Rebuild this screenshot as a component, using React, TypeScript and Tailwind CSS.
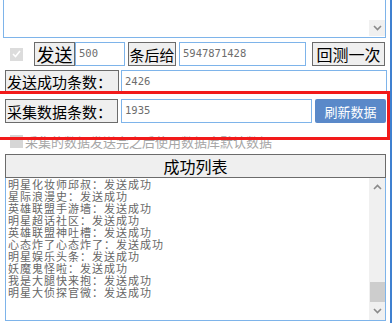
import React from 'react';

const cjk = { fontFamily: '"Noto Sans CJK SC", "Noto Sans", sans-serif' };
const mono = { fontFamily: '"DejaVu Sans Mono", "Liberation Mono", monospace' };

const results = [
  '明星化妆师邱叔',
  '星际浪漫史',
  '英雄联盟手游墙',
  '明星超话社区',
  '英雄联盟神吐槽',
  '心态炸了心态炸了',
  '明星娱乐头条',
  '妖魔鬼怪啦',
  '我是大腿快来抱',
  '明星大侦探官微',
];

const Chevron: React.FC<{ up?: boolean }> = ({ up }) => (
  <svg width="9" height="6" viewBox="0 0 9 6" className={up ? 'rotate-180' : ''}>
    <path d="M1 1 L4.5 4.5 L8 1" stroke="#8a8a8a" strokeWidth="1.6" fill="none" />
  </svg>
);

const Field: React.FC<{ value?: string; className: string }> = ({ value, className }) => (
  <div
    className={`h-full border border-[#7eb4ea] bg-white flex items-center pl-[3px] text-[10.5px] text-[#6d6d6d] ${className}`}
    style={mono}
  >
    {value}
  </div>
);

const Btn: React.FC<{ label: string; className: string }> = ({ label, className }) => (
  <div
    className={`h-full border border-[#6b6b6b] bg-[#efefef] flex items-center justify-center leading-none text-black whitespace-nowrap overflow-hidden ${className}`}
    style={cjk}
  >
    {label}
  </div>
);

export default function App() {
  return (
    <div className="relative w-[392px] h-[323px] overflow-hidden bg-white flex">
      <div className="w-[390px] flex flex-col">
        {/* log textarea, scrolled past the top */}
        <div className="ml-[3px] w-[383px] h-[38px] border-x border-b border-[#7eb4ea] flex justify-end items-end pb-[1px]">
          <div className="w-[16px] h-[16px] bg-[#f0f0f0] flex items-center justify-center">
            <Chevron />
          </div>
        </div>

        {/* send row */}
        <div className="mt-[4px] h-[24px] flex items-center">
          <div className="ml-[10px] w-[13px] h-[13px] bg-[#dcdcdc] flex items-center justify-center">
            <svg width="9" height="8" viewBox="0 0 9 8">
              <path d="M1 4 L3.5 6.5 L8 1" stroke="#ffffff" strokeWidth="1.6" fill="none" />
            </svg>
          </div>
          <Btn label="发送" className="ml-[11px] w-[41px] text-[18px]" />
          <Field value="500" className="w-[50px]" />
          <Btn label="条后给" className="ml-[3px] w-[48px] text-[15px]" />
          <Field value="5947871428" className="ml-[3px] w-[127px]" />
          <Btn label="回测一次" className="ml-[6px] w-[73px] text-[16px]" />
        </div>

        {/* sent count */}
        <div className="mt-[4px] h-[23px] flex">
          <Btn label="发送成功条数：" className="ml-[5px] w-[114px] text-[15px] justify-start pl-[1px]" />
          <Field value="2426" className="ml-[2px] w-[266px]" />
        </div>

        {/* collected count */}
        <div className="mt-[6px] h-[24px] flex">
          <Btn label="采集数据条数：" className="ml-[5px] w-[113px] text-[15px] justify-start pl-[1px]" />
          <Field value="1935" className="ml-[3px] w-[191px]" />
          <div
            className="ml-[3px] w-[71px] h-full rounded-[2px] bg-[#5a89c9] text-white text-[13px] flex items-center justify-center leading-none"
            style={cjk}
          >
            刷新数据
          </div>
        </div>

        {/* disabled option */}
        <div className="mt-[10px] h-[16px] flex items-center">
          <div className="ml-[10px] w-[13px] h-[13px] bg-[#d6d6d6]" />
          <span className="ml-[2px] text-[13px] leading-none text-[#a6a6a6] whitespace-nowrap" style={cjk}>
            采集的数据发送完之后使用数据库默认数据
          </span>
        </div>

        {/* success list */}
        <div
          className="mt-[5px] ml-[5px] w-[381px] h-[24px] border border-[#6b6b6b] bg-[#efefef] flex items-center justify-center text-[16px] leading-none text-black"
          style={cjk}
        >
          成功列表
        </div>
        <div className="ml-[5px] w-[381px] h-[143px] border-x border-b border-[#7eb4ea] flex">
          <div className="flex-1 pl-[2px] text-[11px] leading-[12px] tracking-[1px] text-[#666666]" style={cjk}>
            {results.map((name) => (
              <div key={name} className="whitespace-nowrap h-[12px]">
                {name}：发送成功
              </div>
            ))}
          </div>
          <div className="w-[16px] bg-[#f0f0f0] flex flex-col items-center">
            <div className="h-[18px] flex items-center justify-center">
              <Chevron up />
            </div>
            <div className="flex-1" />
            <div className="w-[15px] h-[20px] bg-[#cdcdcd]" />
            <div className="h-[18px] flex items-center justify-center">
              <Chevron />
            </div>
          </div>
        </div>
      </div>
      <div className="w-[2px] h-full bg-[#3f80d0]" />

      {/* red highlight annotation */}
      <div className="absolute left-[-5px] top-[91px] w-[395px] h-[49px] border-[3px] border-[#f21a1a] pointer-events-none" />
    </div>
  );
}
